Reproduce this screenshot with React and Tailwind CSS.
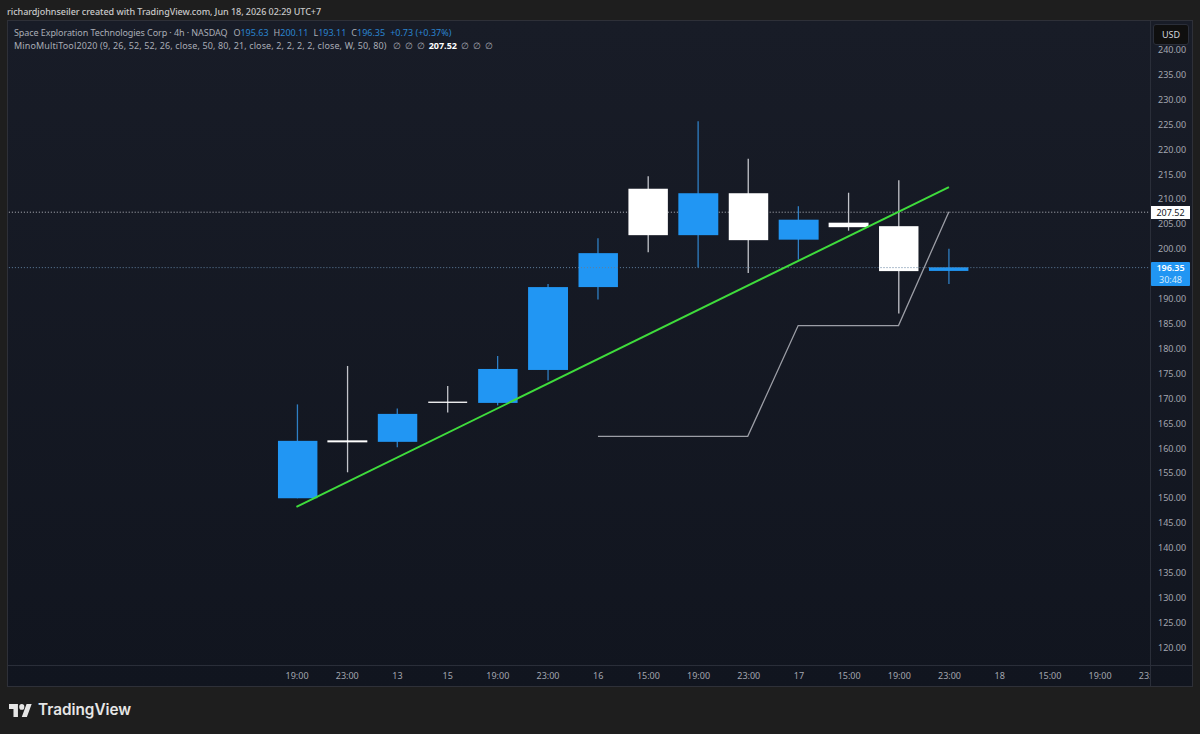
const BLUE = '#2196f3';

// page coordinates: [center, left, right, bodyTop, bodyBottom, wickTop, wickBottom, colour]
const candles = [
  [297, 277.5, 317, 441.5, 499, 405, 499, 'b'],
  [347.2, 327, 367, 441, 443, 366.5, 473, 'w'],
  [397, 377.5, 417, 414.5, 442.5, 409, 448, 'b'],
  [447.5, 428, 467, 402.2, 403.5, 386.5, 413, 'w'],
  [497.5, 478, 517.5, 369.5, 403.5, 356.5, 406, 'b'],
  [548, 528, 568, 287.5, 370.5, 284.5, 381, 'b'],
  [598, 578.5, 618, 253.5, 287.5, 238.5, 300, 'b'],
  [648.3, 628.5, 668, 189, 235.5, 176.5, 252.5, 'w'],
  [698.3, 678.5, 718.5, 193.5, 235.5, 121.5, 268, 'b'],
  [748.5, 729, 768.5, 193.5, 240.5, 159, 273.5, 'w'],
  [798.7, 779, 819, 220, 240, 206.5, 260, 'b'],
  [849, 829, 869, 223, 227.5, 193, 231, 'w'],
  [899.3, 879.5, 919, 226.5, 271.5, 180.5, 314, 'w'],
  [949.5, 929.5, 969, 267.7, 271.3, 249, 284.5, 'b'],
];

const prices = [];
for (let p = 240; p >= 120; p -= 5) prices.push(p.toFixed(2));

const times = ['19:00', '23:00', '13', '15', '19:00', '23:00', '16', '15:00', '19:00', '23:00', '17', '15:00', '19:00', '23:00', '18', '15:00', '19:00', '23:00'];

function Chart() {
  return (
    <svg className="block w-full h-full" viewBox="8 21 1142 645">
      <line x1="8" x2="1150" y1="212.5" y2="212.5" stroke="#b9bbc2" strokeDasharray="1 2" />
      {candles.map((c) => (
        <g key={c[0]}>
          <line
            x1={c[0]}
            x2={c[0]}
            y1={c[5]}
            y2={c[6]}
            stroke={c[7] === 'b' ? '#2f7fc4' : '#c3c5cb'}
            strokeWidth="1.3"
          />
          <rect x={c[1]} y={c[3]} width={c[2] - c[1]} height={c[4] - c[3]} fill={c[7] === 'b' ? BLUE : '#ffffff'} />
        </g>
      ))}
      <line x1="8" x2="1150" y1="268" y2="268" stroke="#5f7f9f" strokeDasharray="1 2" />
      <polyline points="598,437 748,437 798.5,326 899,326 949.5,212" fill="none" stroke="#9c9ea6" strokeWidth="1.3" />
      <line x1="296" y1="507.7" x2="949.5" y2="187.3" stroke="#3fdc3c" strokeWidth="2" />
    </svg>
  );
}

function Legend() {
  return (
    <div className="absolute left-[6px] top-[5px] text-[9px] leading-[13.2px] text-[#a9acb5] whitespace-nowrap font-['Noto_Sans',sans-serif]">
      <div className="flex gap-[5px]">
        <span className="mr-[1px] tracking-[-0.08px]">Space Exploration Technologies Corp · 4h · NASDAQ</span>
        <span>O<span className="text-[#2a84cf]">195.63</span></span>
        <span>H<span className="text-[#2a84cf]">200.11</span></span>
        <span>L<span className="text-[#2a84cf]">193.11</span></span>
        <span>C<span className="text-[#2a84cf]">196.35</span></span>
        <span className="text-[#2a84cf]">+0.73 (+0.37%)</span>
      </div>
      <div className="flex gap-[4px]">
        <span className="mr-[2px] tracking-[0.13px]">MinoMultiTool2020 (9, 26, 52, 52, 26, close, 50, 80, 21, close, 2, 2, 2, 2, close, W, 50, 80)</span>
        <span>∅</span>
        <span>∅</span>
        <span>∅</span>
        <span className="font-bold text-white">207.52</span>
        <span>∅</span>
        <span>∅</span>
        <span>∅</span>
      </div>
    </div>
  );
}

function PriceAxis() {
  return (
    <div className="relative w-[42px] border-l border-[#2a2e39] text-[9px] text-[#a3a6af] font-['Noto_Sans',sans-serif]">
      <div className="flex flex-col pt-[17px] pl-[7px]">
        {prices.map((p) => (
          <div key={p} className="h-[24.92px] leading-[24.92px]">{p === '195.00' ? '' : p}</div>
        ))}
      </div>
      <div className="absolute left-[2px] top-[3px] w-[36px] h-[21px] flex items-center justify-center rounded-[3px] border border-[#2a2e39] bg-[#0f0f0f] text-[#d1d4dc]">
        USD
      </div>
      <div className="absolute left-0 top-[185px] w-[39px] h-[13px] flex items-center justify-center bg-white text-[#131722]">
        207.52
      </div>
      <div className="absolute left-0 top-[241px] w-[39px] h-[24px] flex flex-col items-center justify-center rounded-[1px] bg-[#2196f3] text-white leading-[12px]">
        <span className="font-semibold">196.35</span>
        <span className="text-[#d3eafc]">30:48</span>
      </div>
    </div>
  );
}

function TimeAxis() {
  return (
    <div className="flex h-[21px] border-t border-[#2a2e39] text-[9px] text-[#a3a6af] font-['Noto_Sans',sans-serif]">
      <div className="flex-1 overflow-hidden">
        <div className="flex pl-[264px] leading-[20px]">
          {times.map((t, i) => (
            <div key={i} className="w-[50.2px] shrink-0 text-center">{t}</div>
          ))}
        </div>
      </div>
      <div className="w-[42px] border-l border-[#2a2e39]" />
    </div>
  );
}

export default function App() {
  return (
    <div className="w-[1200px] h-[734px] flex flex-col bg-[#1e1e1e] overflow-hidden">
      <div className="h-5 pl-[7px] text-[9px] leading-[23px] font-medium tracking-[-0.04px] text-[#c9c9c9] font-['Noto_Sans',sans-serif]">
        richardjohnseiler created with TradingView.com, Jun 18, 2026 02:29 UTC+7
      </div>
      <div className="mx-[7px] h-[667px] flex flex-col border border-[#2e3038] bg-gradient-to-b from-[#181c27] to-[#11151f]">
        <div className="flex flex-1 min-h-0">
          <div className="relative flex-1">
            <Chart />
            <Legend />
          </div>
          <PriceAxis />
        </div>
        <TimeAxis />
      </div>
      <div className="flex flex-1 items-center gap-[6px] pl-[9px]">
        <svg width="23" height="13" viewBox="0 4 36 18" preserveAspectRatio="none" fill="#e6e6e6">
          <path d="M14 22H7V11H0V4h14v18zM28 22h-8l7.5-18h8L28 22z" />
          <circle cx="20" cy="8" r="4" />
        </svg>
        <span className="text-[15.3px] font-semibold text-[#e6e6e6] font-['Inter',sans-serif]">TradingView</span>
      </div>
    </div>
  );
}
